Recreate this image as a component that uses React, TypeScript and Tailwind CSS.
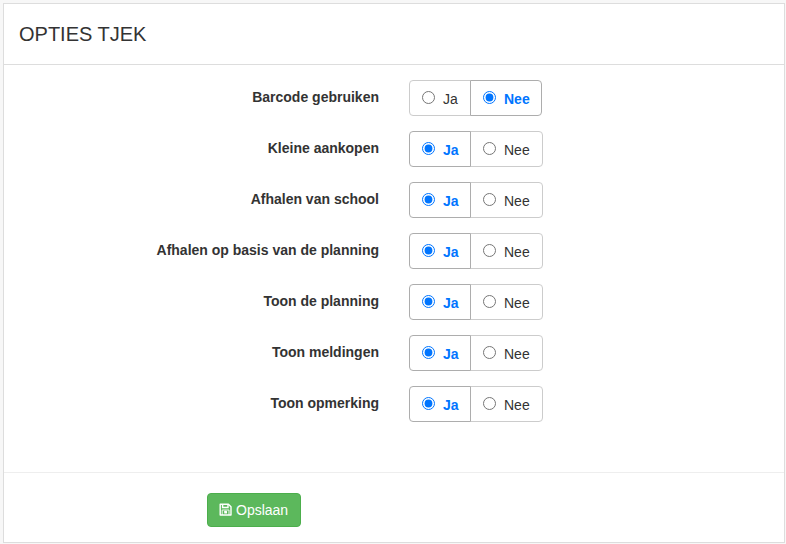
import { useState } from 'react';

const OPTIONS = [
  { label: 'Barcode gebruiken', value: false },
  { label: 'Kleine aankopen', value: true },
  { label: 'Afhalen van school', value: true },
  { label: 'Afhalen op basis van de planning', value: true },
  { label: 'Toon de planning', value: true },
  { label: 'Toon meldingen', value: true },
  { label: 'Toon opmerking', value: true },
];

function FloppyIcon() {
  return (
    <svg className="mr-1 mb-px size-[13px]" viewBox="0 0 13 13" fill="none" stroke="currentColor" strokeWidth="1.4">
      <path d="M1.2 1.2H9.4L12 3.8V12H1.2Z" strokeLinejoin="round" />
      <path d="M3.6 1.2V4.5H9V1.2" />
      <path d="M3.2 12V7H10V12" strokeWidth="0.9" />
      <rect x="5.2" y="7.8" width="2.8" height="2.8" rx="0.5" fill="currentColor" stroke="none" />
    </svg>
  );
}

function Choice({ text, checked, side, onSelect }: { text: string; checked: boolean; side: 'left' | 'right'; onSelect: () => void }) {
  const shape = side === 'left' ? 'w-[62px] rounded-l-[4px]' : checked ? '-ml-px w-[72px] rounded-r-[4px]' : '-ml-px w-[73px] rounded-r-[4px]';
  const tone = checked ? 'z-10 border-[#adadad] font-bold text-[#0075ff]' : 'border-[#cccccc] text-[#333333]';
  return (
    <label className={`relative flex h-9 items-start border bg-white pl-3 ${shape} ${tone}`}>
      <input type="radio" className="mt-[10px] mr-2 size-[13px] shrink-0" checked={checked} onChange={onSelect} />
      <span className="mt-2 leading-5">{text}</span>
    </label>
  );
}

function OptionRow({ label, value }: { label: string; value: boolean }) {
  const [on, setOn] = useState(value);
  return (
    <div className="flex h-9">
      <div className="w-[375px] pt-[7px] text-right leading-5 font-bold text-[#333333]">{label}</div>
      <div className="ml-[30px] flex">
        <Choice side="left" text="Ja" checked={on} onSelect={() => setOn(true)} />
        <Choice side="right" text="Nee" checked={!on} onSelect={() => setOn(false)} />
      </div>
    </div>
  );
}

export default function App() {
  return (
    <div className="h-[544px] w-[786px] bg-[#f7f7f7] pt-[3px] pl-[3px] font-['Liberation_Sans',Arial,sans-serif] text-[14px]">
      <section className="flex h-[540px] w-[782px] flex-col border border-[#dddddd] bg-white">
        <header className="h-[61px] border-b border-[#dddddd] pt-[18px] pl-[15px]">
          <h1 className="text-[20px] leading-6 text-[#333333]">OPTIES TJEK</h1>
        </header>
        <div className="flex grow flex-col gap-[15px] pt-[15px]">
          {OPTIONS.map((o) => (
            <OptionRow key={o.label} label={o.label} value={o.value} />
          ))}
        </div>
        <footer className="h-[70px] border-t border-[#eeeeee] pt-5 pl-[203px]">
          <button className="flex h-[34px] w-[94px] items-center rounded-[4px] border border-[#4cae4c] bg-[#5cb85c] pl-[11px] text-white">
            <FloppyIcon />
            Opslaan
          </button>
        </footer>
      </section>
    </div>
  );
}
